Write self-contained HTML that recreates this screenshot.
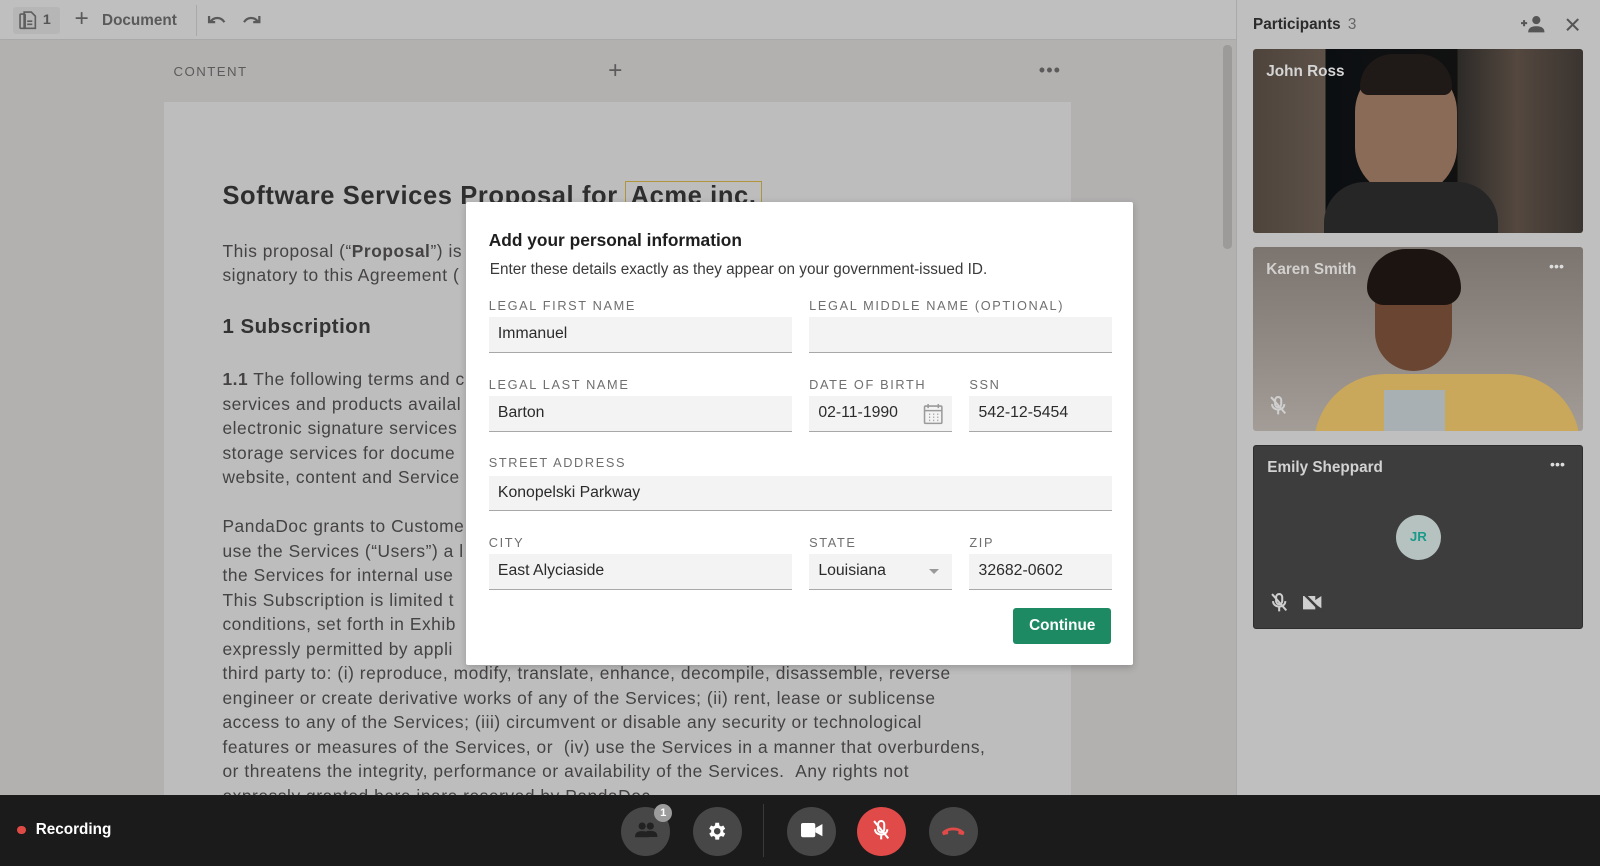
<!DOCTYPE html>
<html><head><meta charset="utf-8"><style>
*{box-sizing:border-box;margin:0;padding:0}
body{width:1600px;height:866px;overflow:hidden;background:#b3b1b0;font-family:"Liberation Sans",sans-serif}
#w{zoom:1.020408;width:1568px;height:849px;position:relative;overflow:hidden}
.a{position:absolute}
.doc p{position:absolute;left:57px;font-size:17px;letter-spacing:0.55px;color:#444242;line-height:24px;white-space:nowrap}
.lbl{position:absolute;font-size:12.5px;letter-spacing:1.6px;color:#6f6f6f}
.inp{position:absolute;height:35px;background:#f3f3f3;border-bottom:1px solid #a8a8a8;font-size:15.5px;color:#2b2b2b;padding:8px 9px}
.btn{position:absolute;top:791px;width:48px;height:48px;border-radius:50%;background:#474747}
</style></head><body><div id="w">
<div class="a" style="left:0;top:0;width:1211px;height:39px;background:#bfbfbf;border-bottom:1px solid #a9a9a9"></div>
<div class="a" style="left:13px;top:7px;width:46px;height:26px;background:#b6b6b6;border-radius:3px"></div>
<svg class="a" style="left:18px;top:10px" width="20" height="20" viewBox="0 0 20 20" fill="none" stroke="#5e5e5e" stroke-width="1.6"><rect x="2" y="4" width="5" height="14" rx="1"/><path d="M6 2h7l4 4v12H6z"/><path d="M9 11h5M9 14h5"/></svg>
<div class="a" style="left:42px;top:12px;font-size:14px;color:#555;font-weight:bold">1</div>
<div class="a" style="left:73px;top:7px;font-size:24px;color:#5a5a5a;line-height:24px">+</div>
<div class="a" style="left:100px;top:12px;font-size:15px;color:#5a5a5a;font-weight:bold">Document</div>
<div class="a" style="left:192px;top:5px;width:1px;height:30px;background:#a9a9a9"></div>
<svg class="a" style="left:202px;top:13px" width="20" height="14" viewBox="0 0 20 14" fill="none" stroke="#5a5a5a" stroke-width="2.2"><path d="M3 3v6h6"/><path d="M4 9c4-6 11-5 14 0"/></svg>
<svg class="a" style="left:237px;top:13px" width="20" height="14" viewBox="0 0 20 14" fill="none" stroke="#5a5a5a" stroke-width="2.2"><path d="M17 3v6h-6"/><path d="M16 9c-4-6-11-5-14 0"/></svg>
<div class="a" style="left:170px;top:63px;font-size:13px;letter-spacing:1.4px;color:#5c5a5a">CONTENT</div>
<div class="a" style="left:596px;top:56px;font-size:24px;color:#5c5a5a">+</div>
<div class="a" style="left:1018px;top:58px;font-size:18px;color:#5c5a5a;letter-spacing:1px">•••</div>
<div class="a" style="left:1199px;top:44px;width:8px;height:200px;background:#9d9b9a;border-radius:4px"></div>
<div class="a doc" style="left:161px;top:100px;width:889px;height:690px;background:#bdbdbd">
<div class="a" style="left:57px;top:78px;font-size:25px;letter-spacing:0.6px;font-weight:bold;color:#2e2e2e;white-space:nowrap">Software Services Proposal for <span style="border:1.5px solid #b0953e;padding:0 4px">Acme inc.</span></div>
<p style="top:134px">This proposal (“<b>Proposal</b>”) is</p>
<p style="top:158px">signatory to this Agreement (</p>
<div class="a" style="left:57px;top:210px;font-size:20px;letter-spacing:0.5px;font-weight:bold;color:#333">1 Subscription</div>
<p style="top:260px"><b>1.1</b> The following terms and c</p>
<p style="top:284px">services and products availal</p>
<p style="top:308px">electronic signature services</p>
<p style="top:332px">storage services for docume</p>
<p style="top:356px">website, content and Service</p>
<p style="top:404px">PandaDoc grants to Custome</p>
<p style="top:428px">use the Services (“Users”) a l</p>
<p style="top:452px">the Services for internal use</p>
<p style="top:476px">This Subscription is limited t</p>
<p style="top:500px">conditions, set forth in Exhib</p>
<p style="top:524px">expressly permitted by appli</p>
<p style="top:548px">third party to: (i) reproduce, modify, translate, enhance, decompile, disassemble, reverse</p>
<p style="top:572px">engineer or create derivative works of any of the Services; (ii) rent, lease or sublicense</p>
<p style="top:596px">access to any of the Services; (iii) circumvent or disable any security or technological</p>
<p style="top:620px">features or measures of the Services, or &nbsp;(iv) use the Services in a manner that overburdens,</p>
<p style="top:644px">or threatens the integrity, performance or availability of the Services. &nbsp;Any rights not</p>
<p style="top:668px">expressly granted here inare reserved by PandaDoc.</p>
</div>
<div class="a" style="left:1211px;top:0;width:357px;height:780px;background:#bfbfbf;border-left:1px solid #a9a9a9"></div>
<div class="a" style="left:1228px;top:16px;font-size:15px;font-weight:bold;color:#2b2b2b">Participants <span style="font-weight:normal;color:#666;margin-left:3px">3</span></div>
<svg class="a" style="left:1490px;top:15px" width="26" height="18" viewBox="0 0 26 18" fill="#555"><path d="M1 8h6M4 5v6" stroke="#555" stroke-width="2"/><circle cx="16" cy="5" r="4"/><path d="M8 17c0-5 4-6 8-6s8 1 8 6z"/></svg>
<svg class="a" style="left:1534px;top:17px" width="15" height="15" viewBox="0 0 15 15" stroke="#555" stroke-width="2"><path d="M2 2l11 11M13 2L2 13"/></svg>
<div class="a" style="left:1228px;top:48px;width:323px;height:180px;border-radius:3px;background:linear-gradient(90deg,#4e443c 0,#5d5148 22%,#0c0f12 22%,#111 62%,#2d2a28 62%,#54483f 80%,#3a3430 100%);overflow:hidden">
<div class="a" style="left:100px;top:14px;width:100px;height:130px;border-radius:48px;background:#8a6b57"></div>
<div class="a" style="left:105px;top:5px;width:90px;height:40px;border-radius:40px 40px 10px 10px;background:#1f1a17"></div>
<div class="a" style="left:70px;top:130px;width:170px;height:60px;border-radius:40px 40px 0 0;background:#262626"></div>
<div class="a" style="left:13px;top:14px;font-size:15px;font-weight:bold;color:#d5d5d5">John Ross</div></div>
<div class="a" style="left:1228px;top:242px;width:323px;height:180px;border-radius:3px;background:linear-gradient(180deg,#7c746e,#a39c97);overflow:hidden">
<div class="a" style="left:60px;top:125px;width:260px;height:80px;border-radius:70px 70px 0 0;background:#c9a85b"></div>
<div class="a" style="left:128px;top:140px;width:60px;height:50px;background:#a9b0b4"></div>
<div class="a" style="left:120px;top:12px;width:75px;height:110px;border-radius:38px;background:#6a4532"></div>
<div class="a" style="left:112px;top:2px;width:92px;height:55px;border-radius:46px 46px 20px 20px;background:#1c1410"></div>
<div class="a" style="left:13px;top:14px;font-size:15px;font-weight:bold;color:#d2d0ce">Karen Smith</div>
<div class="a" style="left:290px;top:12px;font-size:14px;color:#ddd">•••</div>
<svg class="a" style="left:16px;top:145px" width="18" height="20" viewBox="0 0 18 20" stroke="#cfcfcf" stroke-width="2" fill="none"><rect x="6" y="2" width="6" height="10" rx="3"/><path d="M3 9c0 7 12 7 12 0M9 15v4M2 2l14 16"/></svg></div>
<div class="a" style="left:1228px;top:436px;width:323px;height:180px;border-radius:3px;background:#3d3d3d;border:1px solid #2e2e2e">
<div class="a" style="left:13px;top:13px;font-size:15px;font-weight:bold;color:#d2d2d2">Emily Sheppard</div>
<div class="a" style="left:290px;top:11px;font-size:14px;color:#ddd">•••</div>
<div class="a" style="left:139px;top:68px;width:44px;height:44px;border-radius:50%;background:#b5c2bf;color:#1a9a8a;font-size:13px;font-weight:bold;text-align:center;line-height:44px">JR</div>
<svg class="a" style="left:16px;top:143px" width="18" height="20" viewBox="0 0 18 20" stroke="#cfcfcf" stroke-width="2" fill="none"><rect x="6" y="2" width="6" height="10" rx="3"/><path d="M3 9c0 7 12 7 12 0M9 15v4M2 2l14 16"/></svg>
<svg class="a" style="left:47px;top:144px" width="20" height="18" viewBox="0 0 20 18"><path d="M1 3h12v13H1z M13 7l6-4v12l-6-4z" fill="#cfcfcf"/><path d="M2 1l16 16" stroke="#3d3d3d" stroke-width="2.5"/></svg></div>
<div class="a" style="left:0;top:779px;width:1568px;height:70px;background:#1b1b1b"></div>
<div class="a" style="left:17px;top:809px;width:8px;height:8px;border-radius:50%;background:#e04a44"></div>
<div class="a" style="left:35px;top:805px;font-size:15px;font-weight:bold;color:#fff">Recording</div>
<div class="btn" style="left:609px"></div>
<svg class="a" style="left:621px;top:806px" width="24" height="16" viewBox="0 0 24 16" fill="#222"><circle cx="8" cy="4" r="3.5"/><circle cx="16" cy="4" r="3.5"/><path d="M1 15c0-5 3-6 7-6s7 1 7 6zM12 9c1-.3 2-.3 4-.3 4 0 7 1 7 6h-8"/></svg>
<div class="a" style="left:641px;top:788px;width:18px;height:18px;border-radius:50%;background:#9c9c9c;color:#fff;font-size:11px;font-weight:bold;text-align:center;line-height:18px">1</div>
<div class="btn" style="left:679px"></div>
<svg class="a" style="left:692px;top:804px" width="22" height="22" viewBox="0 0 24 24" fill="#fff"><path d="M19.4 13a7.5 7.5 0 000-2l2.1-1.6-2-3.5-2.5 1a7 7 0 00-1.7-1L15 3h-4l-.4 2.9a7 7 0 00-1.7 1l-2.5-1-2 3.5L6.6 11a7.5 7.5 0 000 2l-2.1 1.6 2 3.5 2.5-1a7 7 0 001.7 1L11 21h4l.4-2.9a7 7 0 001.7-1l2.5 1 2-3.5zM13 15.5a3.5 3.5 0 110-7 3.5 3.5 0 010 7z" transform="translate(-1 0)"/></svg>
<div class="a" style="left:748px;top:788px;width:1px;height:52px;background:#3a3a3a"></div>
<div class="btn" style="left:771px"></div>
<svg class="a" style="left:785px;top:806px" width="22" height="16" viewBox="0 0 22 16" fill="#fff"><rect x="0" y="1" width="14" height="14" rx="2"/><path d="M14 6l7-4v12l-7-4z"/></svg>
<div class="btn" style="left:840px;background:#e04a48"></div>
<svg class="a" style="left:855px;top:803px" width="18" height="22" viewBox="0 0 18 22" stroke="#fff" stroke-width="2" fill="none"><rect x="6" y="2" width="6" height="11" rx="3"/><path d="M3 10c0 7 12 7 12 0M9 16v4M2 2l14 17"/></svg>
<div class="btn" style="left:910px"></div>
<svg class="a" style="left:922px;top:809px" width="24" height="10" viewBox="0 0 24 10" fill="#e04a48"><path d="M1 6c6-6 16-6 22 0l-1 3-5-1v-3c-3-1-7-1-10 0v3l-5 1z"/></svg>
<div class="a" style="left:457px;top:198px;width:653px;height:454px;background:#fff;border-radius:2px;box-shadow:0 2px 8px rgba(0,0,0,.2)">
<div class="a" style="left:22px;top:27px;font-size:17px;font-weight:bold;color:#1e1e1e">Add your personal information</div>
<div class="a" style="left:23px;top:58px;font-size:15px;color:#3a3a3a">Enter these details exactly as they appear on your government-issued ID.</div>
<div class="lbl" style="left:22px;top:94px">LEGAL FIRST NAME</div>
<div class="lbl" style="left:336px;top:94px">LEGAL MIDDLE NAME (OPTIONAL)</div>
<div class="inp" style="left:22px;top:113px;width:297px">Immanuel</div>
<div class="inp" style="left:336px;top:113px;width:297px"></div>
<div class="lbl" style="left:22px;top:171px">LEGAL LAST NAME</div>
<div class="lbl" style="left:336px;top:171px">DATE OF BIRTH</div>
<div class="lbl" style="left:493px;top:171px">SSN</div>
<div class="inp" style="left:22px;top:190px;width:297px">Barton</div>
<div class="inp" style="left:336px;top:190px;width:140px">02-11-1990</div>
<svg class="a" style="left:448px;top:197px" width="20" height="22" viewBox="0 0 20 22" fill="none" stroke="#9a9a9a" stroke-width="1.5"><rect x="1.5" y="3" width="17" height="17" rx="1"/><path d="M1.5 7.5h17M5 1v4M15 1v4"/><path d="M6 11h1M10 11h1M14 11h1M6 14h1M10 14h1M14 14h1M6 17h1M10 17h1M14 17h1"/></svg>
<div class="inp" style="left:493px;top:190px;width:140px">542-12-5454</div>
<div class="lbl" style="left:22px;top:248px">STREET ADDRESS</div>
<div class="inp" style="left:22px;top:268px;width:611px">Konopelski Parkway</div>
<div class="lbl" style="left:22px;top:326px">CITY</div>
<div class="lbl" style="left:336px;top:326px">STATE</div>
<div class="lbl" style="left:493px;top:326px">ZIP</div>
<div class="inp" style="left:22px;top:345px;width:297px">East Alyciaside</div>
<div class="inp" style="left:336px;top:345px;width:140px">Louisiana</div>
<div class="a" style="left:453px;top:360px;width:0;height:0;border-left:5px solid transparent;border-right:5px solid transparent;border-top:5px solid #999"></div>
<div class="inp" style="left:493px;top:345px;width:140px">32682-0602</div>
<div class="a" style="left:536px;top:398px;width:96px;height:35px;background:#1d8a64;border-radius:3px;color:#fff;font-size:15px;font-weight:bold;text-align:center;line-height:35px">Continue</div>
</div>
</div></body></html>
